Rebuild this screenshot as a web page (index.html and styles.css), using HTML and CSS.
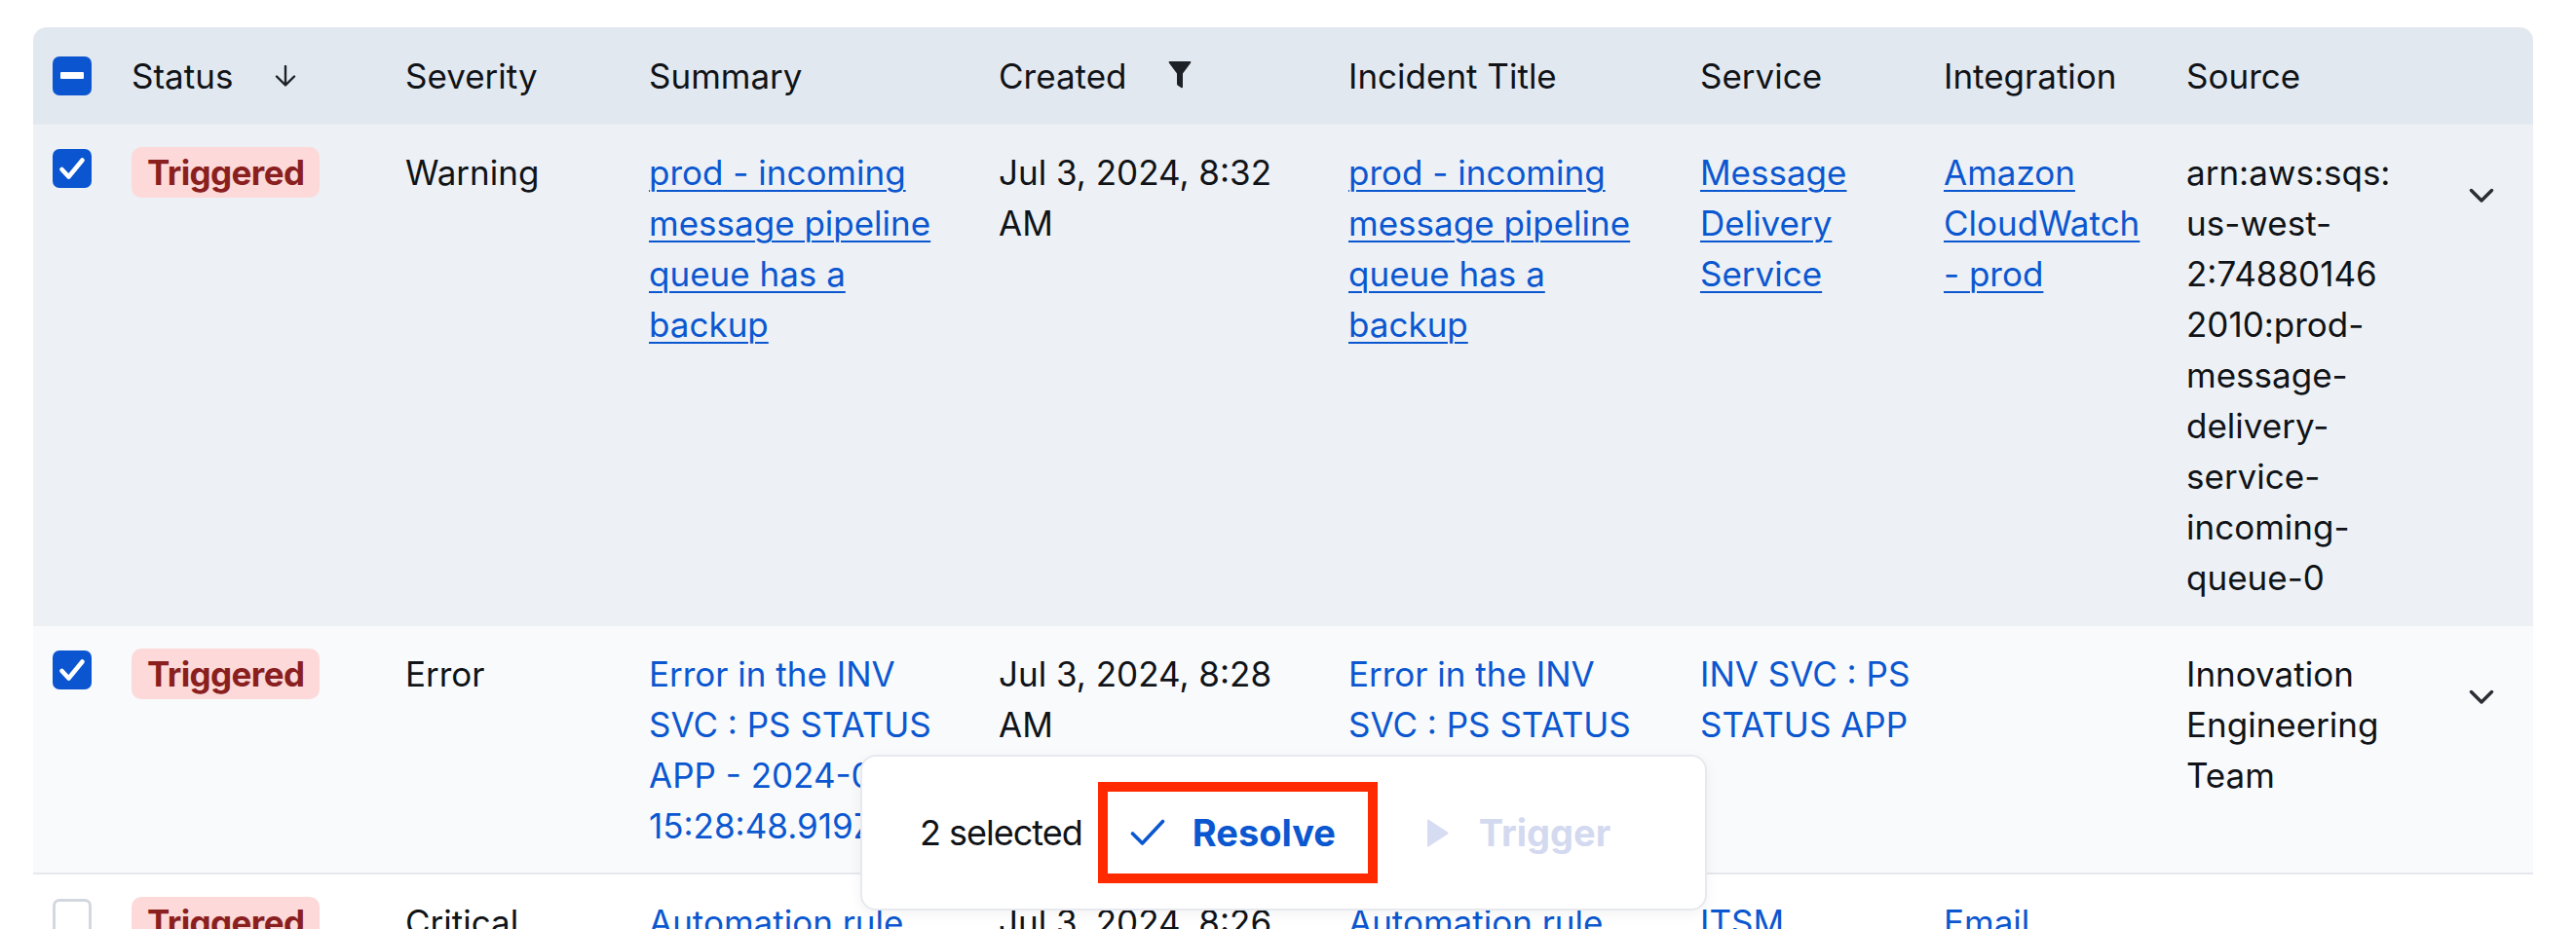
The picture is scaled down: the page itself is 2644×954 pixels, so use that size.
FILE: index.html
```html
<!DOCTYPE html>
<html lang="en">
<head>
<meta charset="utf-8">
<title>Alerts</title>
<link rel="stylesheet" href="styles.css">
</head>
<body>
<div class="page">
  <div class="table">
    <div class="row head">
      <div class="cell cb-cell">
        <span class="checkbox">
          <svg width="24" height="7" viewBox="0 0 24 7"><rect x="0" y="0" width="24" height="7" rx="1" fill="#fff"/></svg>
        </span>
      </div>
      <div class="cell head-cell">Status
        <svg class="sort-icon" width="24" height="22" viewBox="0 0 24 22"><path d="M12 1 V20 M3 11.5 L12 20.5 L21 11.5" fill="none" stroke="#1d2126" stroke-width="2.4" stroke-linecap="round" stroke-linejoin="round"/></svg>
      </div>
      <div class="cell head-cell">Severity</div>
      <div class="cell head-cell">Summary</div>
      <div class="cell head-cell">Created
        <svg class="filter-icon" width="24" height="28" viewBox="0 0 24 28"><path d="M1.5 0 H22.5 Q24 0 23.2 1.6 L15 12.5 V26 Q15 28 13.3 27 L10.2 25 Q9 24.3 9 23 V12.5 L0.8 1.6 Q0 0 1.5 0 Z" fill="#1d2126"/></svg>
      </div>
      <div class="cell head-cell">Incident Title</div>
      <div class="cell head-cell">Service</div>
      <div class="cell head-cell">Integration</div>
      <div class="cell head-cell">Source</div>
      <div class="cell"></div>
    </div>

    <div class="row body-row hovered">
      <div class="cell cb-cell">
        <span class="checkbox">
          <svg width="28" height="24" viewBox="0 0 28 24"><path d="M3.5 13 L10.5 20.5 L24.5 3.5" fill="none" stroke="#fff" stroke-width="4.6" stroke-linecap="round" stroke-linejoin="round"/></svg>
        </span>
      </div>
      <div class="cell"><span class="badge">Triggered</span></div>
      <div class="cell">Warning</div>
      <div class="cell"><a class="link wrap-wide" href="#">prod - incoming message pipeline queue has a backup</a></div>
      <div class="cell"><span class="wrap-date">Jul 3, 2024, 8:32 AM</span></div>
      <div class="cell"><a class="link wrap-wide" href="#">prod - incoming message pipeline queue has a backup</a></div>
      <div class="cell"><a class="link wrap-mid" href="#">Message Delivery Service</a></div>
      <div class="cell"><a class="link wrap-mid" href="#">Amazon CloudWatch - prod</a></div>
      <div class="cell">arn:aws:sqs:<br>us-west-<br>2:74880146<br>2010:prod-<br>message-<br>delivery-<br>service-<br>incoming-<br>queue-0</div>
      <div class="cell chevron-cell">
        <svg width="26" height="16" viewBox="0 0 26 16"><path d="M2.5 2.5 L13 13 L23.5 2.5" fill="none" stroke="#2a2e34" stroke-width="3.4" stroke-linecap="round" stroke-linejoin="round"/></svg>
      </div>
    </div>

    <div class="row body-row selected">
      <div class="cell cb-cell">
        <span class="checkbox">
          <svg width="28" height="24" viewBox="0 0 28 24"><path d="M3.5 13 L10.5 20.5 L24.5 3.5" fill="none" stroke="#fff" stroke-width="4.6" stroke-linecap="round" stroke-linejoin="round"/></svg>
        </span>
      </div>
      <div class="cell"><span class="badge">Triggered</span></div>
      <div class="cell">Error</div>
      <div class="cell"><a class="link wrap-wide" href="#">Error in the INV SVC : PS STATUS APP - <span class="nowrap">2024-07-03</span> 15:28:48.919Z</a></div>
      <div class="cell"><span class="wrap-date">Jul 3, 2024, 8:28 AM</span></div>
      <div class="cell"><a class="link wrap-wide" href="#">Error in the INV SVC : PS STATUS APP - <span class="nowrap">2024-07-03</span> 15:28:48.919Z</a></div>
      <div class="cell"><a class="link wrap-mid" href="#">INV SVC : PS STATUS APP</a></div>
      <div class="cell"></div>
      <div class="cell"><span class="wrap-mid">Innovation Engineering Team</span></div>
      <div class="cell chevron-cell">
        <svg width="26" height="16" viewBox="0 0 26 16"><path d="M2.5 2.5 L13 13 L23.5 2.5" fill="none" stroke="#2a2e34" stroke-width="3.4" stroke-linecap="round" stroke-linejoin="round"/></svg>
      </div>
    </div>

    <div class="row body-row plain">
      <div class="cell cb-cell">
        <span class="checkbox empty"></span>
      </div>
      <div class="cell"><span class="badge">Triggered</span></div>
      <div class="cell">Critical</div>
      <div class="cell"><a class="link wrap-wide" href="#">Automation rule failed</a></div>
      <div class="cell"><span class="wrap-date">Jul 3, 2024, 8:26 AM</span></div>
      <div class="cell"><a class="link wrap-wide" href="#">Automation rule failed</a></div>
      <div class="cell"><a class="link wrap-mid" href="#">ITSM</a></div>
      <div class="cell"><a class="link wrap-mid" href="#">Email</a></div>
      <div class="cell"></div>
      <div class="cell chevron-cell">
        <svg width="26" height="16" viewBox="0 0 26 16"><path d="M2.5 2.5 L13 13 L23.5 2.5" fill="none" stroke="#2a2e34" stroke-width="3.4" stroke-linecap="round" stroke-linejoin="round"/></svg>
      </div>
    </div>
  </div>

  <div class="bulkbar">
    <span class="count">2 selected</span>
    <button class="action resolve" type="button">
      <svg width="36" height="28" viewBox="0 0 36 28"><path d="M2.5 15 L12.5 25 L33.5 2.5" fill="none" stroke="#0b57d0" stroke-width="3.6" stroke-linecap="round" stroke-linejoin="round"/></svg>
      <span>Resolve</span>
    </button>
    <button class="action trigger" type="button" disabled>
      <svg width="22" height="29" viewBox="0 0 22 29"><path d="M0 1.5 Q0 0 1.4 0.8 L21 13.5 Q22 14.5 21 15.5 L1.4 28.2 Q0 29 0 27.5 Z" fill="#d6dcf2"/></svg>
      <span>Trigger</span>
    </button>
  </div>
</div>
</body>
</html>
```

FILE: styles.css
```css
* {
  box-sizing: border-box;
}

html, body {
  margin: 0;
  padding: 0;
  background: #ffffff;
}

body {
  font-family: Inter, "Noto Sans", "Liberation Sans", sans-serif;
  font-size: 35px;
  line-height: 52px;
  color: #101317;
}

.page {
  position: relative;
  height: 954px;
  overflow: hidden;
  padding: 28px 44px 0 34px;
}

.table {
  border-radius: 14px 14px 0 0;
  overflow: hidden;
}

.row {
  display: grid;
  grid-template-columns: 101px 281px 250px 359px 359px 361px 250px 249px 250px 1fr;
}

.head {
  height: 100px;
  background: #e2e8f0;
  align-items: center;
  border-bottom: 1px solid #e7ebf0;
}

.head-cell {
  display: flex;
  align-items: center;
}

.sort-icon {
  margin-left: 42px;
}

.filter-icon {
  margin-left: 42px;
  margin-top: -2px;
}

.body-row {
  align-items: start;
  padding: 23px 0 22px;
  border-bottom: 2px solid #e5e8ec;
}

.hovered {
  background: #edf1f5;
  border-bottom-color: #eef1f4;
}

.selected {
  background: #f8fafc;
}

.plain {
  background: #ffffff;
}

.cb-cell {
  padding-left: 20px;
}

.checkbox {
  width: 40px;
  height: 40px;
  border-radius: 7px;
  background: #0b55d0;
  display: flex;
  align-items: center;
  justify-content: center;
}

.body-row .checkbox {
  margin-top: 2px;
}

.checkbox.empty {
  background: #ffffff;
  border: 3px solid #d3d8df;
}

.badge {
  display: inline-block;
  height: 52px;
  padding: 0 16px;
  border-radius: 10px;
  background: #fdd9d9;
  color: #8a1f1f;
  font-weight: 700;
  letter-spacing: -0.6px;
}

.link {
  color: #0b57d0;
  text-decoration: none;
}

.hovered .link {
  text-decoration: underline;
  text-decoration-thickness: 2px;
  text-underline-offset: 5px;
}

.nowrap {
  white-space: nowrap;
}

.wrap-wide {
  display: block;
  max-width: 318px;
}

.wrap-date {
  display: block;
  max-width: 300px;
}

.wrap-mid {
  display: block;
  max-width: 218px;
}

.chevron-cell {
  display: flex;
  justify-content: center;
  padding-top: 42px;
}

.bulkbar {
  position: absolute;
  left: 883px;
  top: 775px;
  width: 869px;
  height: 160px;
  background: #ffffff;
  border: 2px solid #e7e9ee;
  border-radius: 16px;
  box-shadow: 0 4px 14px rgba(16, 24, 40, 0.05);
  display: flex;
  align-items: center;
  padding-left: 59px;
}

.count {
  font-size: 36px;
  letter-spacing: -1px;
  color: #101317;
}

.action {
  font-family: inherit;
  font-size: 38px;
  font-weight: 700;
  line-height: 52px;
  background: none;
  border: none;
  display: flex;
  align-items: center;
  padding: 0;
}

.resolve {
  margin-left: 16px;
  width: 287px;
  height: 104px;
  border: 10px solid #ff2a00;
  padding-left: 23px;
  gap: 28px;
  color: #0b57d0;
}

.trigger {
  margin-left: 51px;
  gap: 31px;
  color: #d3d9ef;
}
```
